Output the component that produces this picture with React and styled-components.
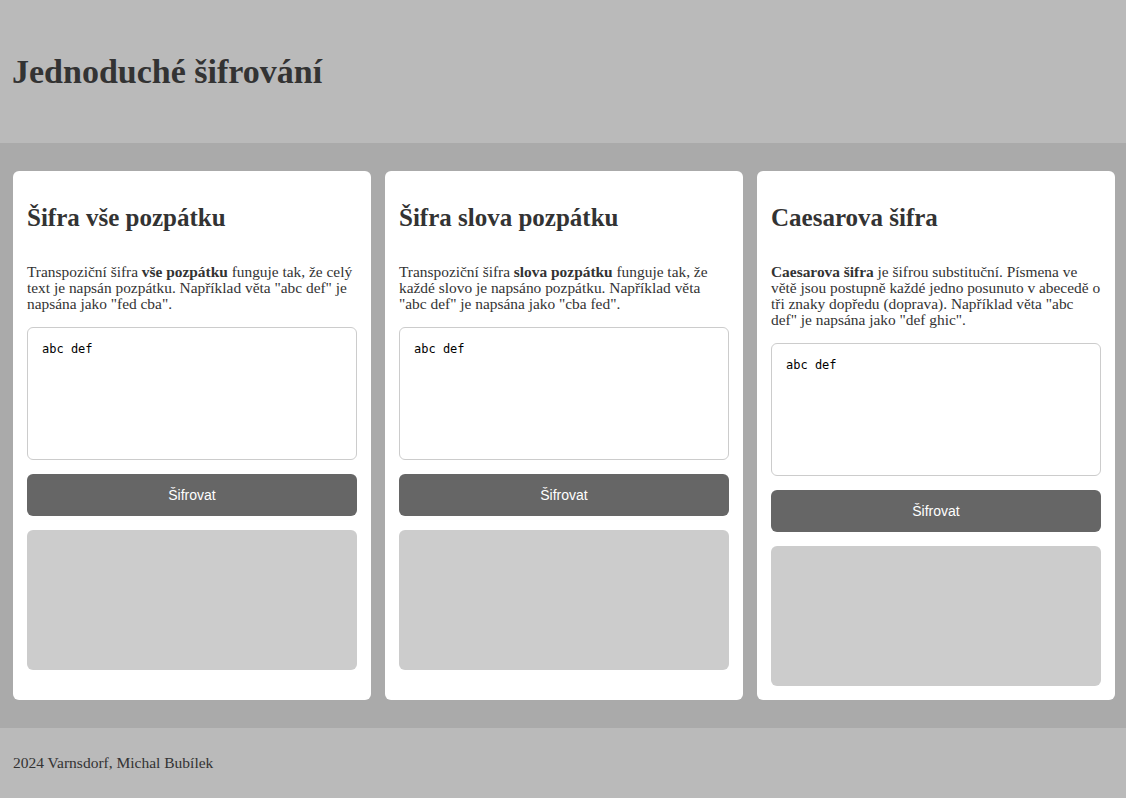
import React from "react";
import styled, { createGlobalStyle } from "styled-components";

const Global = createGlobalStyle`
  html, body { margin: 0; padding: 0; }
  body { font-family: "Liberation Serif", "DejaVu Serif", serif; color: #333; background: #aaa; }
`;

const Page = styled.div`
  display: flex;
  flex-direction: column;
  min-height: 798px;
`;

const Header = styled.header`
  background: #bababa;
  height: 143px;
  display: flex;
  align-items: center;
  padding: 0 12px;
  box-sizing: border-box;
`;

const Title = styled.h1`
  margin: 0;
  font-size: 34px;
  font-weight: bold;
  color: #333;
`;

const Main = styled.main`
  background: #aaa;
  display: grid;
  grid-template-columns: repeat(3, 358px);
  gap: 14px;
  padding: 28px 11px 28px 13px;
`;

const Card = styled.section`
  background: #fff;
  border-radius: 6px;
  padding: 14px;
  display: flex;
  flex-direction: column;
`;

const CardTitle = styled.h2`
  font-size: 25px;
  font-weight: bold;
  margin: 19px 0 0;
  line-height: 28px;
  color: #333;
`;

const Text = styled.p`
  font-size: 15.4px;
  line-height: 16px;
  margin: 32px 0 15px;
  color: #333;
`;

const Area = styled.textarea`
  box-sizing: border-box;
  width: 100%;
  height: 133px;
  border: 1px solid #ccc;
  border-radius: 6px;
  padding: 14px;
  font-family: "DejaVu Sans Mono", monospace;
  font-size: 12px;
  color: #000;
  resize: none;
  outline: none;
  margin: 0;
  display: block;
`;

const Button = styled.button`
  margin-top: 14px;
  height: 42px;
  width: 100%;
  border: none;
  border-radius: 6px;
  background: #666;
  color: #fff;
  font-family: "Liberation Sans", Arial, sans-serif;
  font-size: 14px;
  cursor: pointer;
`;

const Output = styled.div`
  margin-top: 14px;
  height: 140px;
  border-radius: 6px;
  background: #ccc;
`;

const Footer = styled.footer`
  background: #bababa;
  height: 70px;
  display: flex;
  align-items: center;
  padding: 0 13px;
  font-size: 15.5px;
  color: #333;
`;

const cards = [
  {
    title: "Šifra vše pozpátku",
    body: (
      <>
        Transpoziční šifra <b>vše pozpátku</b> funguje tak, že celý text je napsán pozpátku. Například věta "abc def" je napsána jako "fed cba".
      </>
    ),
  },
  {
    title: "Šifra slova pozpátku",
    body: (
      <>
        Transpoziční šifra <b>slova pozpátku</b> funguje tak, že každé slovo je napsáno pozpátku. Například věta "abc def" je napsána jako "cba fed".
      </>
    ),
  },
  {
    title: "Caesarova šifra",
    body: (
      <>
        <b>Caesarova šifra</b> je šifrou substituční. Písmena ve větě jsou postupně každé jedno posunuto v abecedě o tři znaky dopředu (doprava). Například věta "abc def" je napsána jako "def ghic".
      </>
    ),
  },
];

export default function App() {
  return (
    <Page>
      <Global />
      <Header>
        <Title>Jednoduché šifrování</Title>
      </Header>
      <Main>
        {cards.map((c) => (
          <Card key={c.title}>
            <CardTitle>{c.title}</CardTitle>
            <Text>{c.body}</Text>
            <Area defaultValue="abc def" />
            <Button>Šifrovat</Button>
            <Output />
          </Card>
        ))}
      </Main>
      <Footer>2024 Varnsdorf, Michal Bubílek</Footer>
    </Page>
  );
}
